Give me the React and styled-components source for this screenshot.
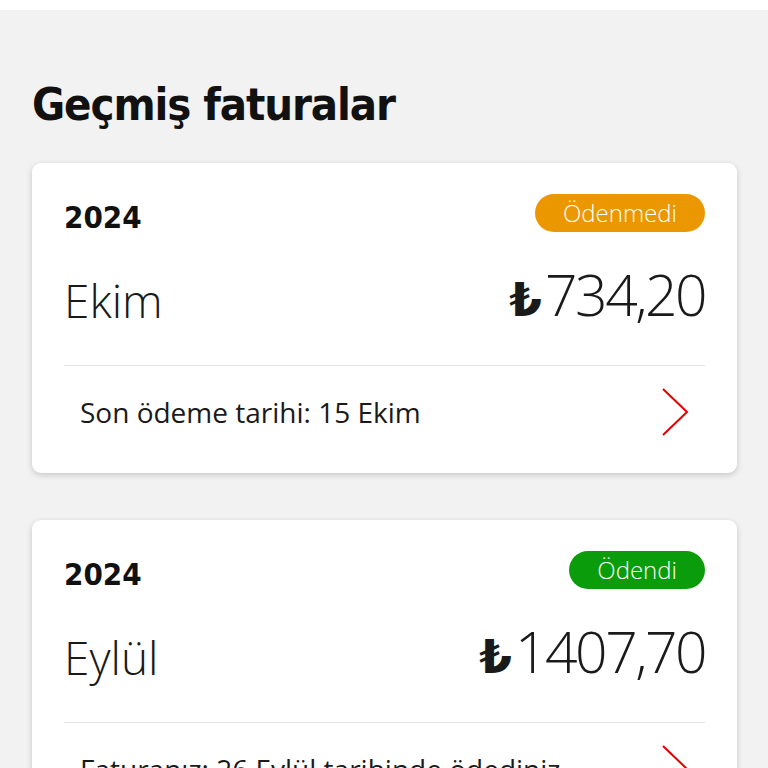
import React from "react";
import styled, { createGlobalStyle } from "styled-components";

const Global = createGlobalStyle`
  html, body { margin: 0; padding: 0; }
  body {
    background: #f2f2f2;
    font-family: "Open Sans", "Noto Sans", sans-serif;
    color: #1a1a1a;
  }
`;

const TopBar = styled.div`
  height: 10px;
  background: #ffffff;
`;

const Page = styled.main`
  padding: 0 31px 0 32px;
`;

const Title = styled.h1`
  margin: 0;
  padding-top: 65px;
  height: 88px;
  font-family: "DejaVu Sans Condensed", "DejaVu Sans", sans-serif;
  font-stretch: condensed;
  font-weight: 700;
  font-size: 45px;
  line-height: 60px;
  letter-spacing: -1.1px;
  color: #111;
`;

const List = styled.div`
  display: flex;
  flex-direction: column;
  gap: 47px;
`;

const Card = styled.section`
  background: #fff;
  border-radius: 9px;
  box-shadow: 0 2px 6px rgba(0, 0, 0, 0.18);
  padding: 31px 32px 0 32px;
`;

const Header = styled.div`
  display: flex;
  justify-content: space-between;
  align-items: center;
  height: 38px;
`;

const Year = styled.div`
  font-family: "DejaVu Sans Condensed", "DejaVu Sans", sans-serif;
  font-stretch: condensed;
  font-weight: 700;
  font-size: 31px;
  line-height: 38px;
  padding-top: 8px;
  color: #111;
`;

const Badge = styled.span`
  display: inline-flex;
  align-items: center;
  justify-content: center;
  height: 38px;
  padding: 0 28px;
  border-radius: 19px;
  background: ${(p) => p.$bg};
  color: #fff;
  font-weight: 300;
  font-size: 24px;
  line-height: 1;
`;

const Main = styled.div`
  display: flex;
  justify-content: space-between;
  align-items: center;
  height: 134px;
  box-sizing: border-box;
  padding-bottom: 4px;
  border-bottom: 1px solid #e6e6e6;
`;

const Month = styled.div`
  font-weight: 300;
  font-size: 46px;
  line-height: 60px;
  padding-top: 6px;
  color: #1a1a1a;
`;

const Amount = styled.div`
  font-weight: 300;
  font-size: 57px;
  line-height: 60px;
  color: #1a1a1a;
  letter-spacing: -2.5px;
`;

const Lira = styled.span`
  font-family: "DejaVu Sans", sans-serif;
  font-weight: 700;
  font-size: 47px;
  letter-spacing: 0;
  margin-right: 3px;
`;

const Footer = styled.div`
  display: flex;
  justify-content: space-between;
  align-items: center;
  padding: 22px 16px 37px 16px;
`;

const FooterText = styled.span`
  font-size: 28px;
  line-height: 48px;
  color: #1a1a1a;
`;

const Chevron = () => (
  <svg width="28" height="48" viewBox="0 0 28 48" fill="none">
    <path d="M2 1 L26 24 L2 47" stroke="#e60000" strokeWidth="2" strokeLinejoin="miter" />
  </svg>
);

const bills = [
  { year: "2024", status: "Ödenmedi", color: "#eb9700", month: "Ekim", amount: "734,20", note: "Son ödeme tarihi: 15 Ekim" },
  { year: "2024", status: "Ödendi", color: "#0b9c0b", month: "Eylül", amount: "1407,70", note: "Faturanız: 26 Eylül tarihinde ödediniz" },
];

export default function App() {
  return (
    <>
      <Global />
      <TopBar />
      <Page>
        <Title>Geçmiş faturalar</Title>
        <List>
          {bills.map((b, i) => (
            <Card key={i}>
              <Header>
                <Year>{b.year}</Year>
                <Badge $bg={b.color}>{b.status}</Badge>
              </Header>
              <Main>
                <Month>{b.month}</Month>
                <Amount>
                  <Lira>₺</Lira>
                  {b.amount}
                </Amount>
              </Main>
              <Footer>
                <FooterText>{b.note}</FooterText>
                <Chevron />
              </Footer>
            </Card>
          ))}
        </List>
      </Page>
    </>
  );
}
